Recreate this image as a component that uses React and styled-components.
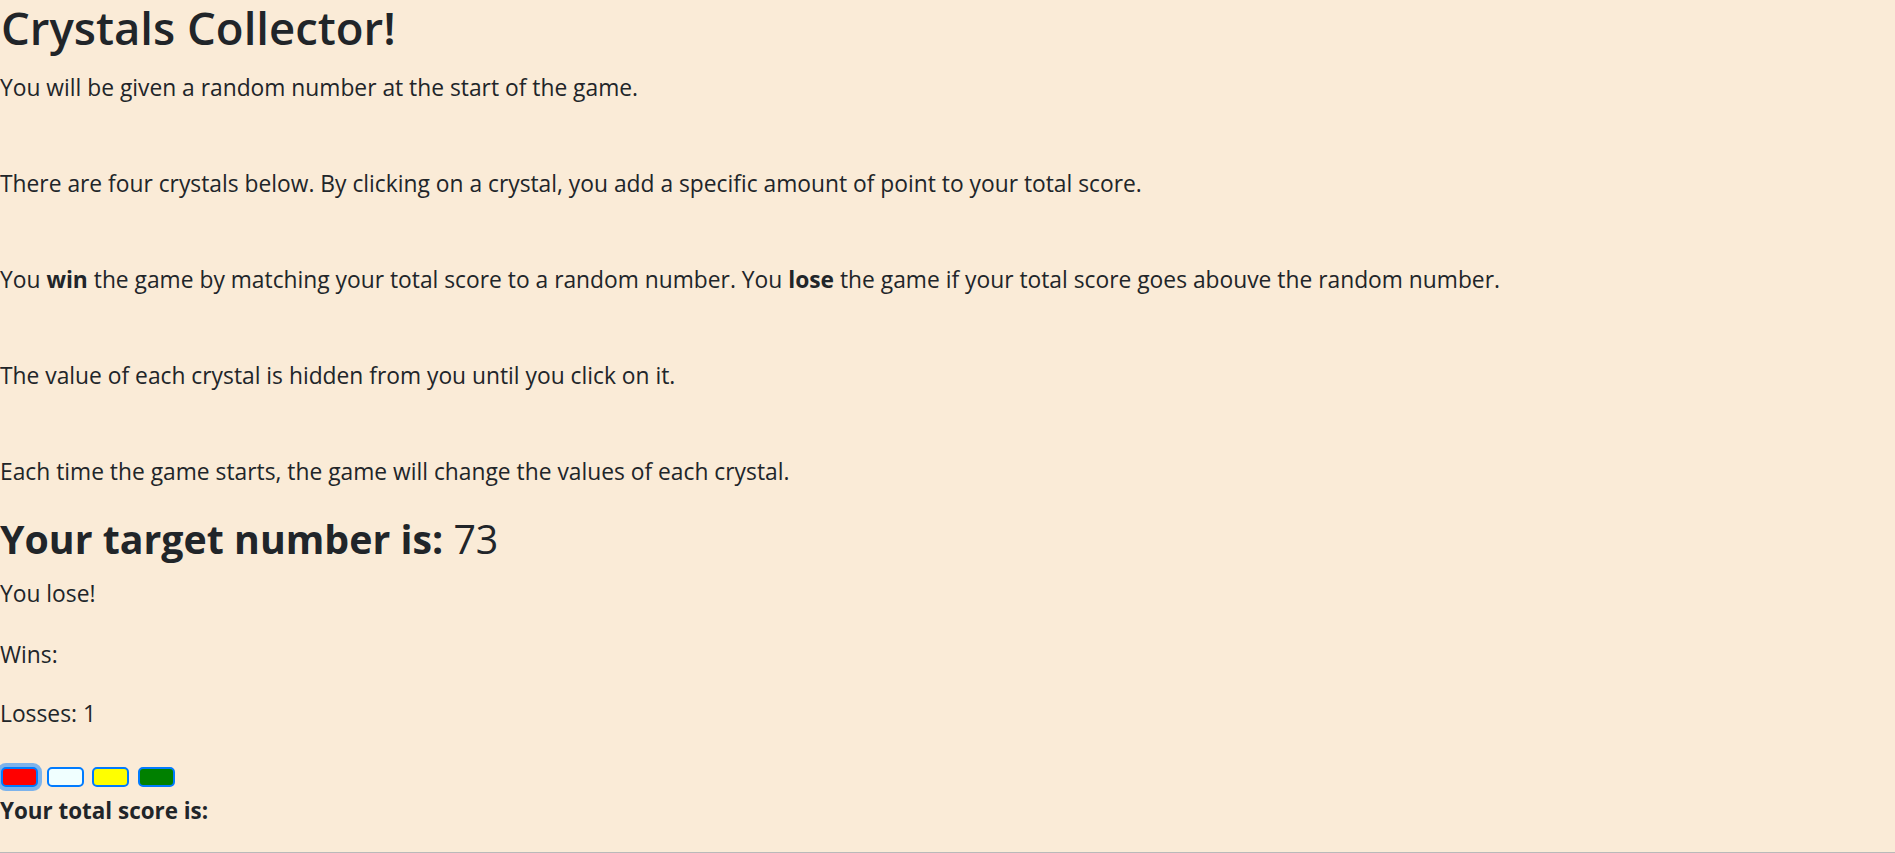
import React from "react";
import styled, { createGlobalStyle } from "styled-components";

const GlobalStyle = createGlobalStyle`
  html, body {
    margin: 0;
    padding: 0;
    background: #faebd7;
  }
  body {
    font-family: "Open Sans", "Noto Sans", "DejaVu Sans", sans-serif;
    color: #212529;
  }
  *, *::before, *::after { box-sizing: border-box; }
`;

const Page = styled.main`
  min-height: 853px;
  border-bottom: 1px solid #b9b9b9;
  background: #faebd7;
  overflow: hidden;
`;

const Title = styled.h1`
  margin: 0 0 15px;
  padding-left: 1px;
  font-size: 45.5px;
  line-height: 55px;
  font-weight: 600;
  white-space: nowrap;
`;

const Intro = styled.p`
  margin: 0 0 ${(p) => (p.$last ? 24 : 60)}px;
  font-size: 22.8px;
  line-height: 36px;
`;

const Target = styled.h2`
  margin: 0 0 12px;
  font-size: 39.3px;
  line-height: 50px;
  font-weight: 400;
  strong { font-weight: 700; }
`;

const Status = styled.p`
  margin: 0 0 ${(p) => p.$gap}px;
  font-size: 22.8px;
  line-height: 36px;
`;

const CrystalRow = styled.div`
  display: flex;
  gap: 8.5px;
  padding-left: 1px;
  height: 20px;
  margin-bottom: 9px;
`;

const Crystal = styled.button`
  width: 37px;
  height: 20px;
  padding: 0;
  border: 2px solid #007bff;
  border-radius: 5px;
  background: ${(p) => p.$color};
  box-shadow: ${(p) => (p.$focused ? "0 0 0 4px rgba(0, 123, 255, 0.5)" : "none")};
  cursor: pointer;
`;

const Score = styled.div`
  font-size: 22.4px;
  line-height: 30px;
  font-weight: 700;
`;

const crystals = [
  { color: "#ff0000", focused: true },
  { color: "#f0ffff" },
  { color: "#ffff00" },
  { color: "#008000" },
];

export default function App() {
  return (
    <>
      <GlobalStyle />
      <Page>
        <Title>Crystals Collector!</Title>
        <Intro>You will be given a random number at the start of the game.</Intro>
        <Intro>
          There are four crystals below. By clicking on a crystal, you add a specific amount of point to your total score.
        </Intro>
        <Intro>
          You <strong>win</strong> the game by matching your total score to a random number. You <strong>lose</strong> the game if your total score goes abouve the random number.
        </Intro>
        <Intro>The value of each crystal is hidden from you until you click on it.</Intro>
        <Intro $last>Each time the game starts, the game will change the values of each crystal.</Intro>
        <Target>
          <strong>Your target number is:</strong> 73
        </Target>
        <Status $gap={25}>You lose!</Status>
        <Status $gap={23}>Wins: </Status>
        <Status $gap={35}>Losses: 1</Status>
        <CrystalRow>
          {crystals.map((c, i) => (
            <Crystal key={i} $color={c.color} $focused={c.focused} aria-label="crystal" />
          ))}
        </CrystalRow>
        <Score>Your total score is:</Score>
      </Page>
    </>
  );
}
